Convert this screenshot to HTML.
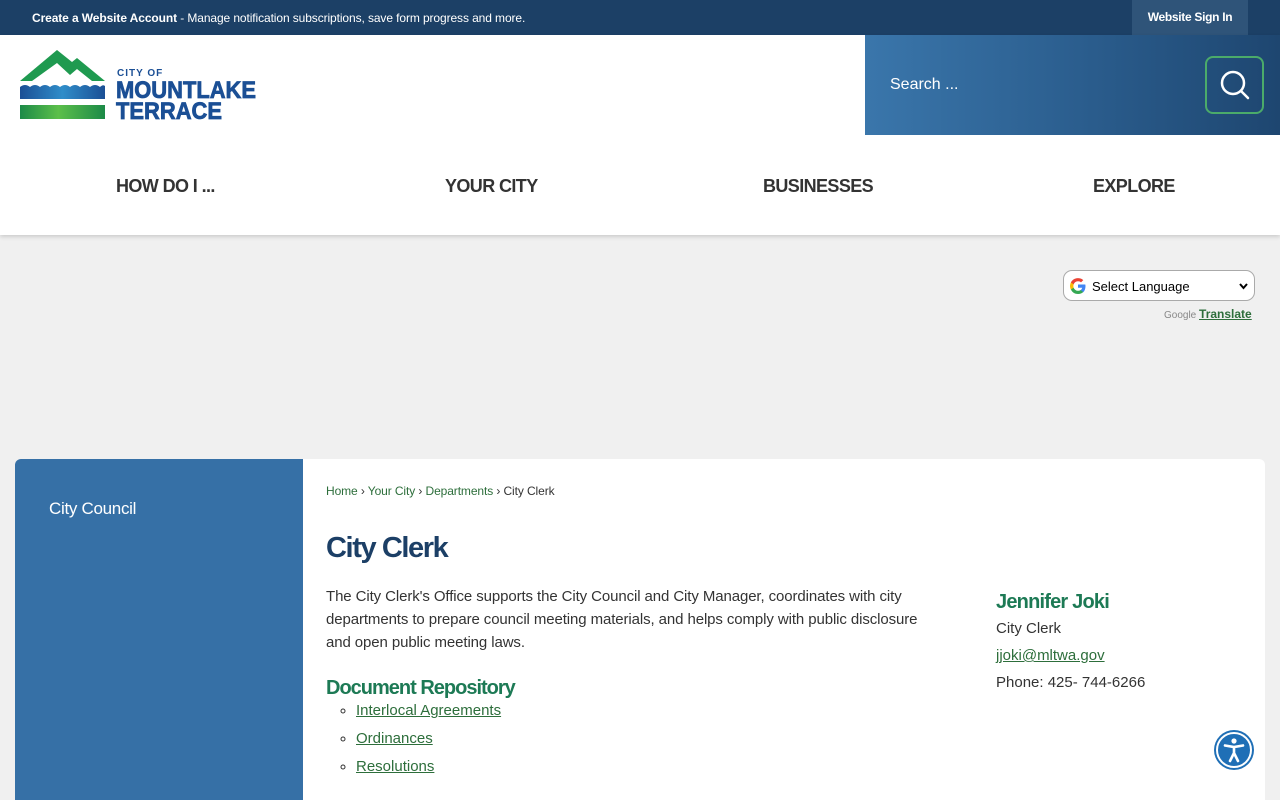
<!DOCTYPE html>
<html><head><meta charset="utf-8"><style>
*{margin:0;padding:0;box-sizing:border-box}
body{width:1280px;height:800px;overflow:hidden;background:#f0f0f0;font-family:"Liberation Sans",Arial,sans-serif;position:relative}
.top{position:absolute;left:0;top:0;width:1280px;height:35px;background:#1c4066;color:#fff;font-size:12px}
.top .msg{position:absolute;left:32px;top:11px;letter-spacing:-0.1px}
.top .sign{position:absolute;left:1132px;top:0;width:116px;height:35px;background:#2f5479;text-align:center;line-height:35px;font-weight:bold;font-size:12px;letter-spacing:-0.3px}
.hdr{position:absolute;top:35px;left:0;width:1280px;height:200px;background:#fff;box-shadow:0 2px 4px rgba(0,0,0,.15)}
.search{position:absolute;left:865px;top:0;width:415px;height:100px;background:linear-gradient(90deg,#3a76ab,#2a5c8c 55%,#1e4670)}
.search span{position:absolute;left:25px;top:41px;color:#fff;font-size:16px}
.sbtn{position:absolute;left:340px;top:21px;width:59px;height:58px;border:2px solid #4bab6a;border-radius:8px}
.nav a{position:absolute;top:141px;font-weight:bold;font-size:18px;color:#333;text-decoration:none;letter-spacing:-0.6px}
.side{position:absolute;left:15px;top:459px;width:288px;height:341px;background:#3670a6;border-radius:6px 0 0 0}
.side span{position:absolute;left:34px;top:40px;color:#fff;font-size:17px;letter-spacing:-0.3px}
.main{position:absolute;left:303px;top:459px;width:962px;height:341px;background:#fff;border-radius:0 6px 0 0}
.bc{position:absolute;left:23px;top:25px;font-size:12px;color:#333;letter-spacing:-0.1px}
.bc a{color:#2d6e3b;text-decoration:none}
h1{position:absolute;left:23px;top:73px;font-size:29px;color:#1c3f66;letter-spacing:-1.4px}
.p{position:absolute;left:23px;top:126px;width:605px;font-size:15px;line-height:23px;color:#333;letter-spacing:-0.1px}
h2{position:absolute;left:23px;top:218px;font-size:20px;color:#1d7a55;letter-spacing:-1px}
ul{position:absolute;left:53px;top:243px;font-size:15px;list-style:circle}
ul li{height:28px;color:#333}
ul a{color:#2d6e3b;text-decoration:underline}
.c{position:absolute;left:693px;top:130px;font-size:15px;color:#333;line-height:27px}
.c b{font-size:20px;color:#1d7a55;letter-spacing:-0.8px;display:block;margin-bottom:-1px}
.c a{color:#2d6e3b;text-decoration:underline}
.gt{position:absolute;left:1063px;top:270px;width:192px;height:31px;border:1px solid #aaa;border-radius:9px;background:#fff;font-size:13px}
</style></head><body>
<div class="top"><div class="msg"><b>Create a Website Account</b> - Manage notification subscriptions, save form progress and more.</div><div class="sign">Website Sign In</div></div>
<div class="hdr">
<svg style="position:absolute;left:20px;top:14px" width="240" height="72" viewBox="0 0 240 72">
<defs><linearGradient id="g" x1="0" x2="1"><stop offset="0" stop-color="#1c8a48"/><stop offset=".45" stop-color="#5cbf4a"/><stop offset="1" stop-color="#1c8a48"/></linearGradient>
<linearGradient id="b" x1="0" x2="1"><stop offset="0" stop-color="#1b4f95"/><stop offset=".5" stop-color="#2f8dc9"/><stop offset="1" stop-color="#1b4f95"/></linearGradient></defs>
<path d="M0 32 L37 1 L52 13 L57 9 L85 32 L72 32 L57 20 L50 26 L37 14 L12 32Z" fill="#1f9a50"/>
<path d="M0 38 q5 -4 10 0 q5 -4 10 0 q5 -4 10 0 q5 -4 10 0 q5 -4 10 0 q5 -4 10 0 q5 -4 10 0 q5 -4 10 0 q3 -3 5 -1 L85 50 L0 50Z" fill="url(#b)"/>
<rect x="0" y="56" width="85" height="14" fill="url(#g)"/>
<text x="97" y="27" font-family="Liberation Sans" font-weight="bold" font-size="10" fill="#1b4f95" letter-spacing="1">CITY OF</text>
<text x="96" y="49" font-family="Liberation Sans" font-weight="bold" font-size="24" fill="#1b4f95" stroke="#1b4f95" stroke-width="0.8" textLength="140" lengthAdjust="spacingAndGlyphs">MOUNTLAKE</text>
<text x="96" y="70" font-family="Liberation Sans" font-weight="bold" font-size="24" fill="#1b4f95" stroke="#1b4f95" stroke-width="0.8" textLength="106" lengthAdjust="spacingAndGlyphs">TERRACE</text>
</svg>
<div class="search"><span>Search ...</span><div class="sbtn"><svg width="55" height="54" viewBox="0 0 55 54"><circle cx="26" cy="25" r="11" fill="none" stroke="#fff" stroke-width="2.5"/><path d="M34 33 L41 40" stroke="#fff" stroke-width="2.5" stroke-linecap="round"/></svg></div></div>
<div class="nav"><a style="left:116px">HOW DO I ...</a><a style="left:445px">YOUR CITY</a><a style="left:763px">BUSINESSES</a><a style="left:1093px">EXPLORE</a></div>
</div>
<div class="gt"><svg style="position:absolute;left:5px;top:6px" width="18" height="18" viewBox="0 0 18 18"><path d="M16.5 9.2c0-.6-.1-1.2-.2-1.7H9v3.3h4.2a3.6 3.6 0 0 1-1.6 2.4v2h2.6c1.5-1.4 2.3-3.5 2.300-6z" fill="#4285f4"/><path d="M9 17c2.2 0 4-.7 5.2-2l-2.6-2c-.7.5-1.6.8-2.6.8-2 0-3.8-1.4-4.4-3.2H1.9v2A8 8 0 0 0 9 17z" fill="#34a853"/><path d="M4.6 10.6a4.8 4.8 0 0 1 0-3.2v-2H1.9a8 8 0 0 0 0 7.2z" fill="#fbbc05"/><path d="M9 4.2c1.2 0 2.2.4 3 1.2l2.3-2.3A8 8 0 0 0 1.9 5.4l2.7 2A4.8 4.8 0 0 1 9 4.2z" fill="#ea4335"/></svg><span style="position:absolute;left:28px;top:8px">Select Language</span><svg style="position:absolute;right:6px;top:12px" width="9" height="7" viewBox="0 0 9 7"><path d="M1 1 L4.5 5 L8 1" stroke="#000" stroke-width="2" fill="none"/></svg></div>
<div style="position:absolute;left:1164px;top:307px;font-size:10px;color:#888">Google <u style="color:#2d6e3b;font-weight:bold;font-size:12px">Translate</u></div>
<div class="side"><span>City Council</span></div>
<div class="main">
<div class="bc"><a>Home</a> › <a>Your City</a> › <a>Departments</a> › City Clerk</div>
<h1>City Clerk</h1>
<div class="p">The City Clerk's Office supports the City Council and City Manager, coordinates with city departments to prepare council meeting materials, and helps comply with public disclosure and open public meeting laws.</div>
<h2>Document Repository</h2>
<ul><li><a>Interlocal Agreements</a></li><li><a>Ordinances</a></li><li><a>Resolutions</a></li></ul>
<div class="c"><b>Jennifer Joki</b>City Clerk<br><a>jjoki@mltwa.gov</a><br>Phone: 425- 744-6266</div>
</div>
<svg style="position:absolute;left:1213px;top:729px" width="42" height="42" viewBox="0 0 42 42"><circle cx="21" cy="21" r="20" fill="#1f6fb6"/><circle cx="21" cy="21" r="17" fill="none" stroke="#fff" stroke-width="2"/><circle cx="21" cy="12" r="2.6" fill="#fff"/><path d="M12 16.5 L21 18 L30 16.5 M21 18 V24 M21 24 L17 32 M21 24 L25 32" stroke="#fff" stroke-width="2.6" fill="none" stroke-linecap="round"/></svg>
</body></html>
